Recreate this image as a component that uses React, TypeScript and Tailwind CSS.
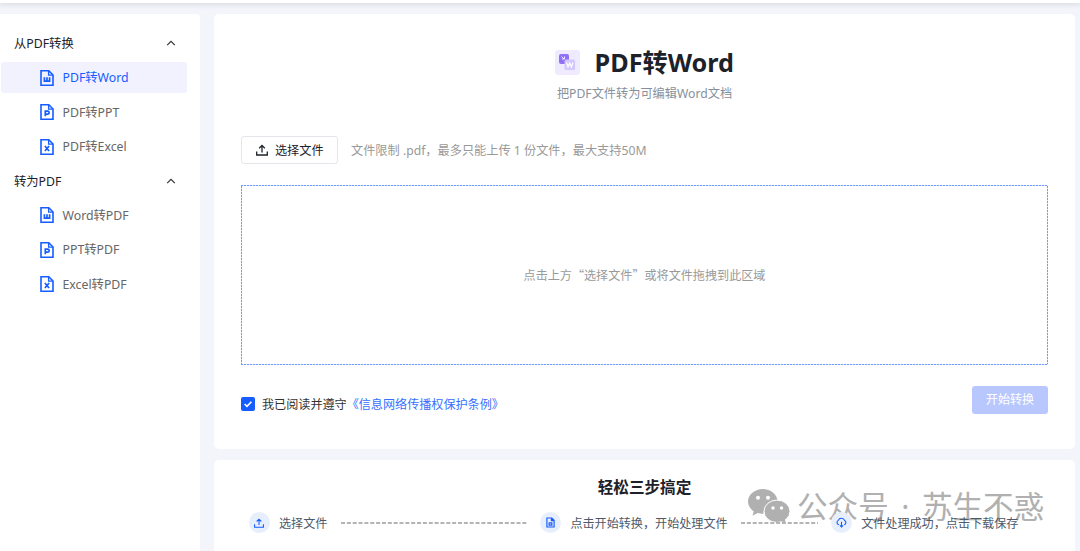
import type { ReactNode } from 'react';

type Letter = 'W' | 'P' | 'X';

const letterPaths: Record<Letter, string> = {
  W: 'M4.4 7.2v3.9h5.2V7.2M7 7.2v3.8',
  P: 'M5.3 12.2V7.2h2.4a1.4 1.4 0 010 2.9H5.3',
  X: 'M4.9 7l4.2 5M9.1 7l-4.2 5',
};

const menu: { title: string; items: { label: string; letter: Letter; active?: boolean }[] }[] = [
  {
    title: '从PDF转换',
    items: [
      { label: 'PDF转Word', letter: 'W', active: true },
      { label: 'PDF转PPT', letter: 'P' },
      { label: 'PDF转Excel', letter: 'X' },
    ],
  },
  {
    title: '转为PDF',
    items: [
      { label: 'Word转PDF', letter: 'W' },
      { label: 'PPT转PDF', letter: 'P' },
      { label: 'Excel转PDF', letter: 'X' },
    ],
  },
];

function FileIcon({ letter }: { letter: Letter }) {
  return (
    <svg viewBox="0 0 14 16" fill="none" stroke="#165dff" strokeWidth="1.6" className="h-4 w-3.5 shrink-0">
      <path d="M1 .8h7.8L13 5v10.2H1z" />
      <path d="M8.6 1v4.2H13" strokeWidth="1.3" />
      <path d={letterPaths[letter]} strokeWidth="1.7" />
    </svg>
  );
}

function UploadIcon({ className }: { className?: string }) {
  return (
    <svg viewBox="0 0 12 12" fill="none" stroke="currentColor" strokeWidth="1.3" className={className}>
      <path d="M6 8.4V1.6M3.2 4.2L6 1.4l2.8 2.8M.7 7.4V11h10.6V7.4" />
    </svg>
  );
}

function Sidebar() {
  return (
    <aside className="flex h-[537px] w-[200px] shrink-0 flex-col gap-[3.4px] rounded-tr bg-white pt-[14px] text-[12.3px]">
      {menu.map((group) => (
        <div key={group.title} className="flex flex-col gap-[3.4px]">
          <div className="flex h-[31px] items-center justify-between pr-6 pl-3.5 text-[#1d2129]">
            <span className="pt-px">{group.title}</span>
            <svg viewBox="0 0 10 6" fill="none" stroke="#333" strokeWidth="1.2" className="mb-px h-1.5 w-2.5">
              <path d="M1.2 5.2L5 1.4l3.8 3.8" />
            </svg>
          </div>
          {group.items.map((item) => (
            <div
              key={item.label}
              className={
                item.active
                  ? 'mr-[13.5px] ml-px flex h-[31px] items-center gap-[8.5px] rounded-[3px] bg-[#f2f2ff] pl-[39px] text-[#165dff]'
                  : 'mr-[13.5px] ml-px flex h-[31px] items-center gap-[8.5px] pl-[39px] text-[#666]'
              }
            >
              <FileIcon letter={item.letter} />
              <span className="pt-px">{item.label}</span>
            </div>
          ))}
        </div>
      ))}
    </aside>
  );
}

function Step({ icon, label }: { icon: ReactNode; label: string }) {
  return (
    <div className="flex shrink-0 items-center gap-[9.5px] text-[#4e5969]">
      <span className="flex size-[21px] items-center justify-center rounded-full bg-[#e8effc] text-[#165dff]">{icon}</span>
      <span className="pt-0.5">{label}</span>
    </div>
  );
}

function Dashes({ className }: { className: string }) {
  return (
    <svg className={className}>
      <path d="M0 1H400" stroke="#b4b4b4" strokeWidth="2" strokeDasharray="4 1.85" />
    </svg>
  );
}

function Watermark() {
  return (
    <div className="absolute top-[29px] left-[534px] flex items-center text-[#b0b0b0]">
      <svg viewBox="0 0 42 34" className="h-[34px] w-[42px]">
        <path
          fill="currentColor"
          d="M15 0C6.7 0 0 5.6 0 12.6c0 4 2.2 7.5 5.7 9.8L4.5 26.8l5.2-2.7c1.7.5 3.5.8 5.6.8.5-6.7 6.5-12.4 14.4-12.7C29 5.2 22.6 0 15 0z"
        />
        <ellipse cx="29" cy="22.3" rx="13" ry="11.2" fill="currentColor" stroke="#fff" />
        <path fill="currentColor" d="M32 32l5.5 1.5-1-5z" />
        <g fill="#fff">
          <circle cx="10" cy="8.8" r="2" />
          <circle cx="20" cy="8.8" r="2" />
          <circle cx="25" cy="19" r="1.7" />
          <circle cx="33.5" cy="19" r="1.7" />
        </g>
      </svg>
      <span className="ml-[7px] text-[30.6px] leading-[34px] whitespace-nowrap [word-spacing:4.5px]">
        公众号 · 苏生不惑
      </span>
    </div>
  );
}

// 2px on / 1px off, finer than what border-dashed gives
function DropZone({ children }: { children: ReactNode }) {
  return (
    <div className="mt-[21px] flex h-[180px] flex-col">
      <div className="h-px bg-[repeating-linear-gradient(90deg,#6f9bff_0_2px,#dbe6ff_2px_3px)]" />
      <div className="flex flex-1 justify-between">
        <div className="w-px bg-[repeating-linear-gradient(180deg,#6f9bff_0_2px,#dbe6ff_2px_3px)]" />
        <div className="flex items-center">{children}</div>
        <div className="w-px bg-[repeating-linear-gradient(180deg,#6f9bff_0_2px,#dbe6ff_2px_3px)]" />
      </div>
      <div className="h-px bg-[repeating-linear-gradient(90deg,#6f9bff_0_2px,#dbe6ff_2px_3px)]" />
    </div>
  );
}

export default function App() {
  return (
    <div className="flex h-[551px] flex-col overflow-hidden bg-[#f4f5fa] font-['Noto_Sans','Noto_Sans_CJK_SC',sans-serif] text-[12.1px] leading-[18px]">
      <header className="h-[3px] shrink-0 bg-white shadow-[0_1px_5px_1px_rgba(0,0,0,0.1)]" />
      <div className="mt-[11px] flex gap-[14px]">
        <Sidebar />
        <main className="flex w-[861px] flex-col gap-[11px]">
          <section className="h-[435px] shrink-0 rounded-[5px] bg-white px-[27px] pt-8">
            <div className="flex h-8 items-center justify-center gap-[14.5px]">
              <svg viewBox="0 0 25 25" className="size-[25px]">
                <rect width="25" height="25" rx="3" fill="#f0eafe" />
                <rect x="4" y="4" width="10" height="10" rx="2" fill="#8f70f7" />
                <rect x="9.5" y="9.5" width="10.5" height="10.5" rx="1.5" fill="#d3c8fb" />
                <path d="M6.5 6.5L9 9M9.5 6.5V9H7" stroke="#fff" fill="none" strokeWidth=".8" />
                <path d="M11.5 12.5l1.5 4.5 1.7-4 1.7 4 1.5-4.5" stroke="#fff" fill="none" strokeWidth="1.2" />
              </svg>
              <h1 className="text-[25.2px] leading-8 font-bold text-[#1d2129]">PDF转Word</h1>
            </div>
            <p className="mt-[7px] text-center text-[12.2px] text-[#86909c]">把PDF文件转为可编辑Word文档</p>
            <div className="mt-[33px] flex items-center gap-[13.5px]">
              <button className="flex h-7 w-[96.5px] items-center justify-center gap-[7px] rounded-[3px] border border-[#e5e6eb] pl-px text-[12.2px] text-[#1d2129]">
                <UploadIcon className="size-3" />
                <span className="pt-px">选择文件</span>
              </button>
              <span className="pt-0.5 text-[12.2px] text-[#999]">文件限制 .pdf，最多只能上传 1 份文件，最大支持50M</span>
            </div>
            <DropZone>
              <span className="pb-px font-['Noto_Sans_CJK_SC',sans-serif] text-[#999]">
                点击上方“选择文件”或将文件拖拽到此区域
              </span>
            </DropZone>
            <div className="mt-5 flex items-start justify-between">
              <label className="flex h-[38px] items-center gap-[7px] text-[#333]">
                <svg viewBox="0 0 14 14" className="size-3.5">
                  <rect width="14" height="14" rx="2" fill="#165dff" />
                  <path d="M3.6 7L6 9.3l4.4-4.5" stroke="#fff" strokeWidth="1.6" fill="none" />
                </svg>
                <span className="pt-0.5">
                  我已阅读并遵守<a className="text-[#3670ff]">《信息网络传播权保护条例》</a>
                </span>
              </label>
              <button className="mt-px h-7 w-[76px] rounded-[3px] bg-[#b9c7ff] text-white">开始转换</button>
            </div>
          </section>
          <section className="relative h-[120px] shrink-0 rounded-t-[5px] bg-white pt-4">
            <Watermark />
            <h2 className="text-center text-[15.6px] leading-[22px] font-bold text-[#1d2129]">轻松三步搞定</h2>
            <div className="relative mt-[14px] flex items-center pl-[34.5px]">
              <Step icon={<UploadIcon className="size-[10px]" />} label="选择文件" />
              <Dashes className="mr-[13px] ml-[13.5px] h-0.5 w-[186px] shrink-0" />
              <Step
                icon={
                  <svg viewBox="0 0 10 12" fill="none" stroke="currentColor" strokeWidth="1.3" className="h-[11px] w-[9px]">
                    <path d="M1 1h5.5L9 3.5V11H1zM6 1v3h3M3.5 6.5h3V9h-3z" />
                  </svg>
                }
                label="点击开始转换，开始处理文件"
              />
              <Dashes className="mr-[13px] ml-[13px] h-0.5 w-[77px] shrink-0" />
              <Step
                icon={
                  <svg viewBox="0 0 12 12" fill="none" stroke="currentColor" strokeWidth="1.2" className="size-[11px]">
                    <path d="M3.2 8.5A2.6 2.6 0 012.4 3.7 3.8 3.8 0 019.5 3.9a2.5 2.5 0 01-.6 4.6M6 5.2V11M4.2 9.2L6 11l1.8-1.8" />
                  </svg>
                }
                label="文件处理成功，点击下载保存"
              />
            </div>
          </section>
        </main>
      </div>
    </div>
  );
}
